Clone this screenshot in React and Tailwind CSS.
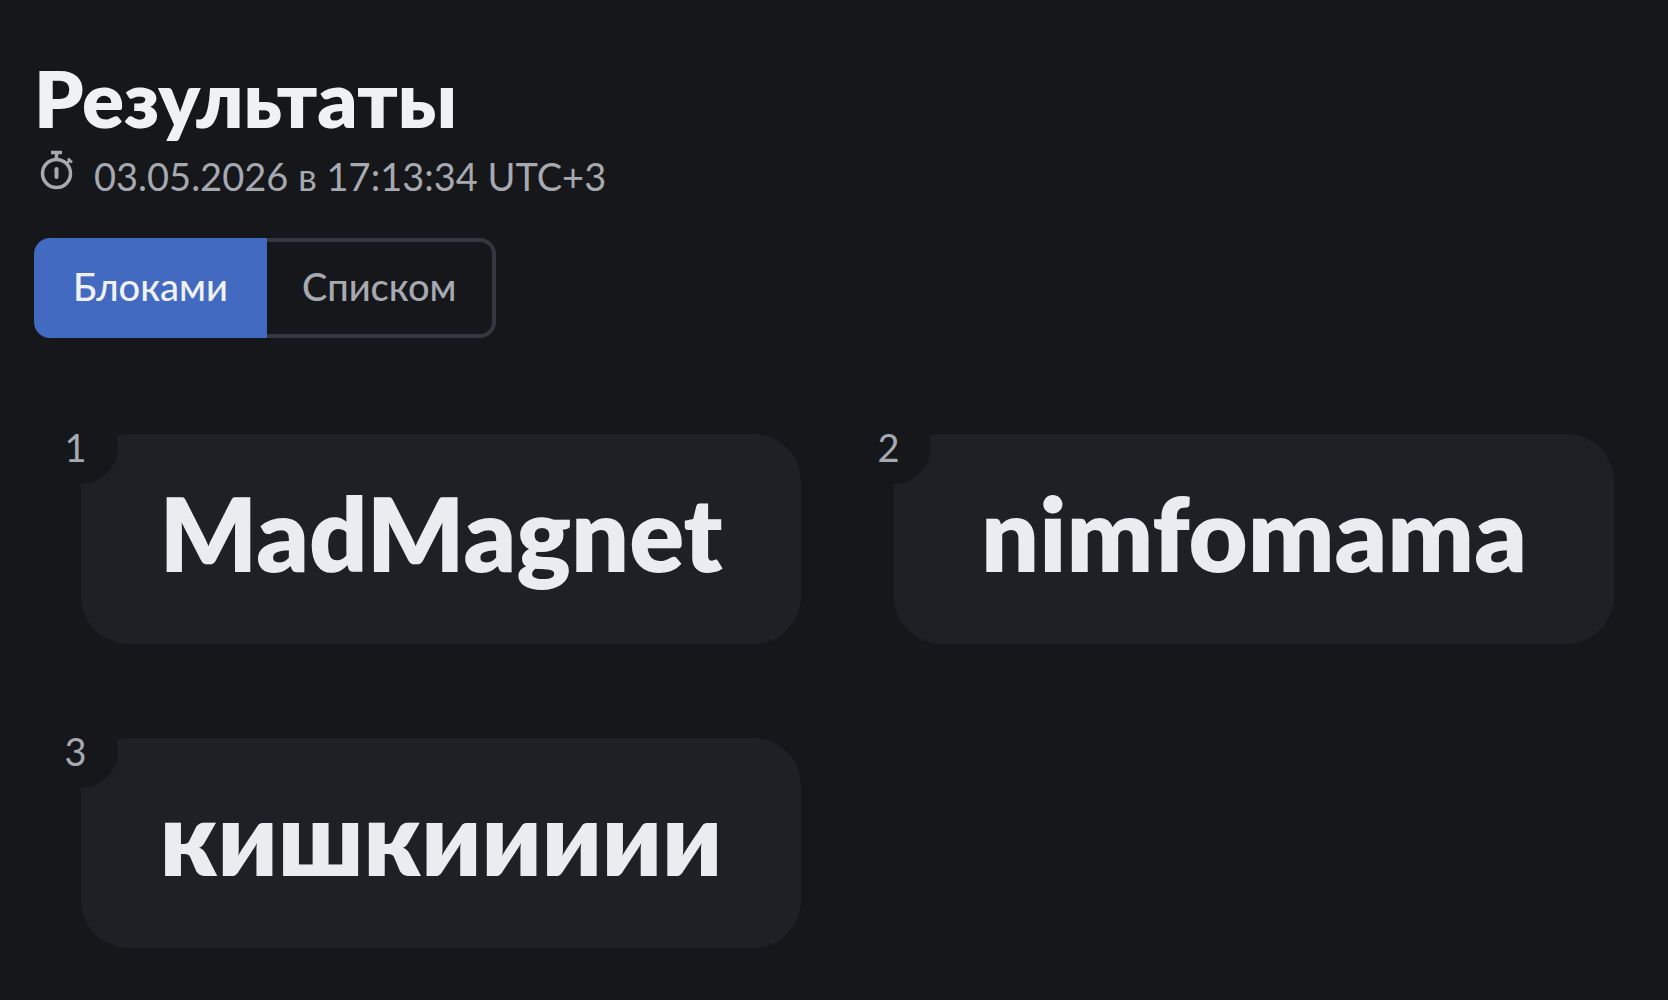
import { useState } from "react";

const results = ["MadMagnet", "nimfomama", "кишкиииии"];

const views = [
  { id: "blocks", label: "Блоками" },
  { id: "list", label: "Списком" },
];

function Stopwatch() {
  return (
    <svg viewBox="0 0 34 42" className="h-[42px] w-[34px] shrink-0" fill="none" stroke="currentColor" aria-hidden="true">
      <circle cx="16.500" cy="23.500" r="14" strokeWidth="3.500" />
      <path d="M11 2.500h11M16.500 3v7" strokeWidth="3.500" />
      <path d="M26 14l4-4M28 8.500l4 4" strokeWidth="2.500" />
      <path d="M16.500 19v8" strokeWidth="4" strokeLinecap="round" />
    </svg>
  );
}

function ResultCard({ index, name }) {
  return (
    <li className="relative flex h-[210px] min-w-0 items-center justify-center rounded-[48px] bg-[#1e2025] pb-3">
      <span className="absolute -top-6 -left-12 flex h-[74px] w-[85px] items-center justify-center rounded-full bg-[#15171a] text-[38px] text-[#a6a9b0]">
        {index}
      </span>
      <span className="text-[102px] leading-none font-extrabold whitespace-nowrap text-[#ebecf0]">{name}</span>
    </li>
  );
}

export default function App() {
  const [view, setView] = useState("blocks");
  return (
    <main className="min-h-screen bg-[#15171a] px-[34px] pt-[58px] pb-[52px] font-['Lato','Open_Sans',sans-serif] text-[#a6a9b0]">
      <h1 className="text-[78px] leading-[80px] font-extrabold text-[#f0f1f5]">Результаты</h1>
      <div className="mt-2 flex h-[52px] items-start gap-5 pl-1.5 text-[38px] leading-[60px] whitespace-nowrap">
        <div className="pt-1">
          <Stopwatch />
        </div>
        <time>03.05.2026 в 17:13:34 UTC+3</time>
      </div>
      <div className="mt-10 flex h-[100px] w-fit" role="group">
        {views.map((v) => (
          <button
            key={v.id}
            type="button"
            aria-pressed={view === v.id}
            onClick={() => setView(v.id)}
            className="border-4 border-[#353740] px-[35px] pb-1 text-[38px] font-medium first:rounded-l-2xl last:rounded-r-2xl last:border-l-0 aria-pressed:border-[#436ac1] aria-pressed:bg-[#436ac1] aria-pressed:text-[#f0f1f5]"
          >
            {v.label}
          </button>
        ))}
      </div>
      <ol className="mt-24 mr-5 ml-[47px] grid grid-cols-2 gap-x-[93px] gap-y-[94px]">
        {results.map((name, i) => (
          <ResultCard key={name} index={i + 1} name={name} />
        ))}
      </ol>
    </main>
  );
}
